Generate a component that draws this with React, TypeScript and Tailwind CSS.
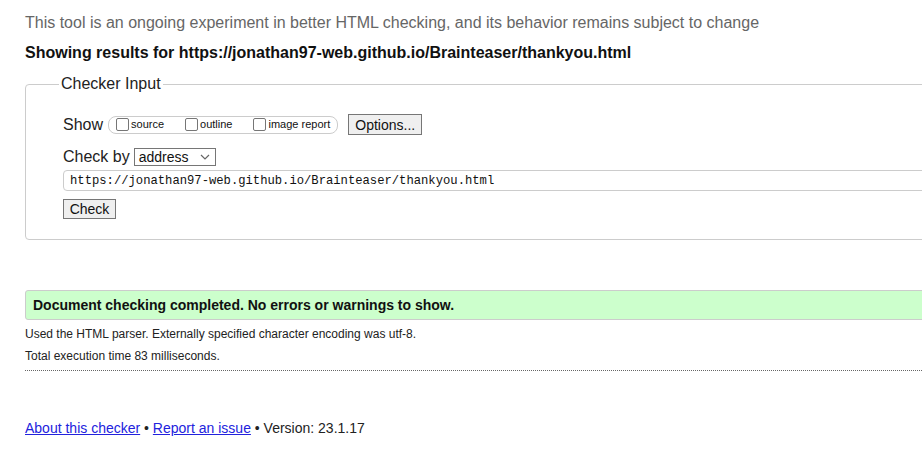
import React from "react";

const Box = () => (
  <span className="inline-block w-[13px] h-[13px] border border-[#767676] rounded-[2px] bg-white shrink-0" />
);

export default function App() {
  return (
    <div
      className="w-[922px] h-[452px] overflow-hidden bg-white text-[#111]"
      style={{ fontFamily: '"Liberation Sans", Arial, sans-serif' }}
    >
      <div className="w-[1100px] pl-[25px]">
        <p className="mt-[14px] text-[16px] leading-[18px] text-[#666]">
          This tool is an ongoing experiment in better HTML checking, and its behavior remains subject to change
        </p>
        <p className="mt-[12px] text-[16px] leading-[18px] font-bold text-[#111]">
          Showing results for https://jonathan97-web.github.io/Brainteaser/thankyou.html
        </p>

        <fieldset className="mt-[13px] border border-[#ccc] rounded-[4px] p-0">
          <legend className="ml-[33px] px-[2px] text-[16px] leading-[18px] text-[#222]">Checker Input</legend>

          <div className="pl-[37px] pb-[20px]">
            <div className="mt-[21px] flex items-center h-[21px]">
              <span className="text-[16px] leading-[18px] text-[#222]">Show</span>
              <div className="ml-[5px] flex items-center h-[18px] border border-[#ccc] rounded-[8px] pl-[7px] pr-[7px] gap-[21px]">
                <label className="flex items-center gap-[2px] text-[11px] leading-[13px]">
                  <Box />
                  <span>source</span>
                </label>
                <label className="flex items-center gap-[2px] text-[11px] leading-[13px]">
                  <Box />
                  <span>outline</span>
                </label>
                <label className="flex items-center gap-[2px] text-[11px] leading-[13px]">
                  <Box />
                  <span>image report</span>
                </label>
              </div>
              <button className="ml-[10px] w-[74px] h-[21px] bg-[#efefef] border border-[#767676] text-[14px] leading-[16px] text-[#111]">
                Options...
              </button>
            </div>

            <div className="mt-[13px] flex items-center h-[18px]">
              <span className="text-[16px] leading-[18px] text-[#222]">Check by</span>
              <div className="ml-[4px] w-[82px] h-[18px] border border-[#767676] flex items-center justify-between pl-[4px] pr-[4px] bg-white">
                <span className="text-[14px] leading-[16px] text-[#111]">address</span>
                <svg width="10" height="6" viewBox="0 0 10 6" className="mr-[1px]">
                  <path d="M1 1 L5 5 L9 1" fill="none" stroke="#666" strokeWidth="1.2" />
                </svg>
              </div>
            </div>

            <div className="mt-[4px] h-[21px] border border-[#ccc] rounded-[4px] flex items-center pl-[6px]">
              <span
                className="text-[12.2px] leading-[14px] text-[#111]"
                style={{ fontFamily: '"Liberation Mono", "DejaVu Sans Mono", monospace' }}
              >
                https://jonathan97-web.github.io/Brainteaser/thankyou.html
              </span>
            </div>

            <button className="mt-[8px] block w-[53px] h-[20px] bg-[#efefef] border border-[#767676] text-[14px] leading-[16px] text-[#111]">
              Check
            </button>
          </div>
        </fieldset>

        <div className="mt-[50px] h-[30px] border border-[#ccc] rounded-l-[3px] bg-[#ccffcc] flex items-center pl-[7px]">
          <span className="text-[14px] leading-[16px] font-bold text-[#111]">
            Document checking completed. No errors or warnings to show.
          </span>
        </div>

        <p className="mt-[7px] text-[12px] leading-[14px] text-[#222]">
          Used the HTML parser. Externally specified character encoding was utf-8.
        </p>
        <p className="mt-[8px] text-[12px] leading-[14px] text-[#222]">Total execution time 83 milliseconds.</p>
        <div className="mt-[7px] border-t border-dotted border-[#666]" />

        <p className="mt-[49px] text-[14px] leading-[16px] text-[#222]">
          <a className="text-[#2222dd] underline">About this checker</a>
          {" \u2022 "}
          <a className="text-[#2222dd] underline">Report an issue</a>
          {" \u2022 Version: 23.1.17"}
        </p>
      </div>
    </div>
  );
}
